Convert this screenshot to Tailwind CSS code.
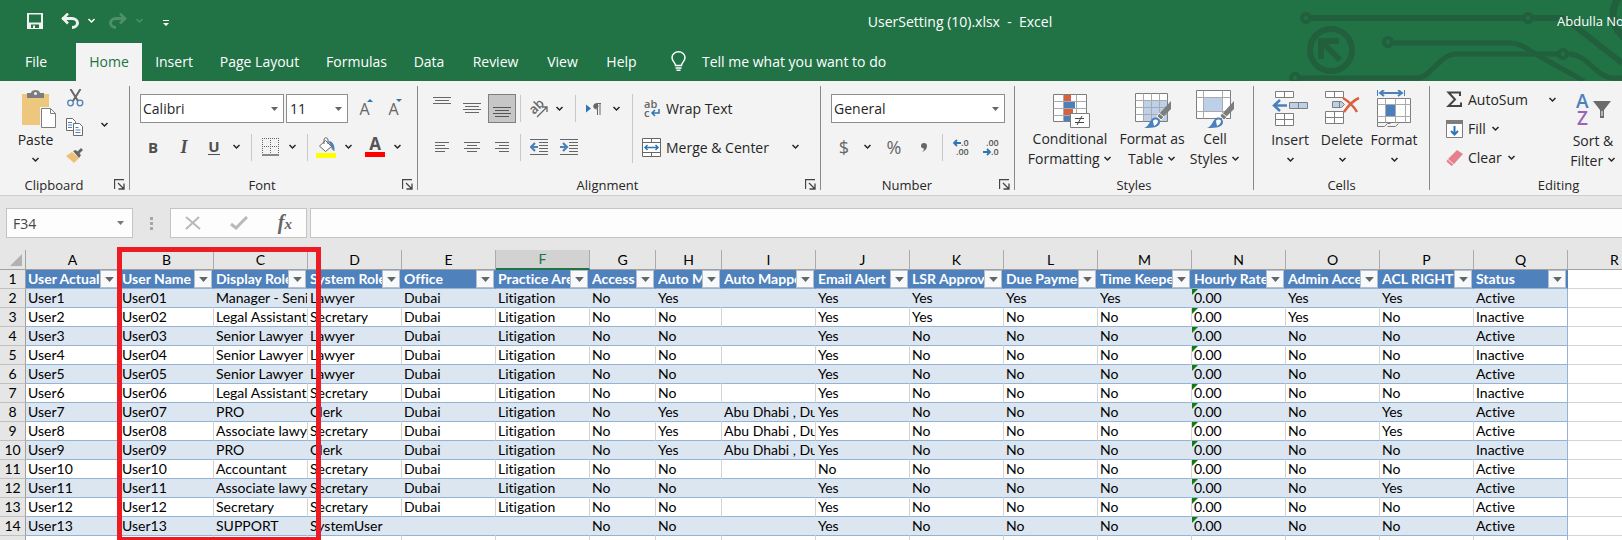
<!DOCTYPE html>
<html lang="en">
<head>
  <meta charset="UTF-8">
  <meta name="viewport" content="width=device-width, initial-scale=1.0">
  <title>UserSetting (10).xlsx - Excel</title>
  <script src="https://cdn.jsdelivr.net/npm/@tailwindcss/browser@4"></script>
</head>
<body class="h-screen overflow-hidden flex flex-col bg-[#e6e6e6] text-[#262626] text-[14px] font-['Open_Sans','Noto_Sans',sans-serif]">

  <!-- shared glyphs -->
  <svg class="hidden">
    <symbol id="chev" viewBox="0 0 8 6"><path d="M1 1l3 3 3-3" fill="none" stroke="currentColor" stroke-width="1.5"/></symbol>
    <symbol id="tri" viewBox="0 0 7 4"><path d="M0 0h7L3.500 4z" fill="currentColor"/></symbol>
    <symbol id="launch" viewBox="0 0 11 11"><path d="M.5 10V.5H10M4 4l5.500 5.500M10 4.500V10H4.500" fill="none" stroke="#444" stroke-width="1.300"/></symbol>
    <symbol id="brush" viewBox="0 0 28 28"><path d="M27 0v8l-8 8-4-3z" fill="#7d7d7d"/><path d="M15 12l5 4-3 3-4-4z" fill="#7d7d7d" stroke="#f3f3f3"/><path d="M0 27c5-2 5-6 8-9 3-3 8-1 8 3 0 5-6 6-16 6z" fill="#4a80bb"/><path d="M9 20c1-2 4-2 5 0 0 2-2 4-4 5z" fill="#fff"/></symbol>
  </svg>

  <!-- title bar + tabs -->
  <header class="relative shrink-0 bg-[#217346] text-white">
    <svg class="absolute right-0 top-0" width="336" height="81" viewBox="0 0 336 81" fill="none" stroke="#215f3d" stroke-width="6">
      <circle cx="20" cy="18" r="4" stroke-width="4"/><path d="M25 18h212M248 18h26c8 0 10 4 16 9l46 36"/><circle cx="242" cy="18" r="4" stroke-width="4"/>
      <circle cx="102" cy="42" r="4" stroke-width="4"/><path d="M107 43h118c11 0 18 8 28 13l45 25" stroke-width="5"/>
      <path d="M14 78h118c12 0 22-24 38-24h102M283 54c18 0 28 24 44 24h9" stroke-width="5"/><circle cx="277" cy="54" r="4" stroke-width="4"/>
      <circle cx="9" cy="78" r="4" stroke-width="4"/>
      <circle cx="45" cy="50" r="21"/><path d="M35 59V41h18M36 42l18 18" stroke-width="6"/>
      <circle cx="355" cy="15" r="28" stroke-width="7"/>
    </svg>
    <div class="relative flex items-center h-[43px]">
      <div class="flex items-center w-[363px] pl-[27px] pb-[2px] shrink-0">
        <button aria-label="Save"><svg width="16" height="16" viewBox="0 0 16 16"><path d="M0 0h16v16H0z" fill="#f2f2f2"/><path d="M2 1.500h12v8H2zM4 11.500h8V15H8v-2.500H6V15H4z" fill="#217346"/></svg></button>
        <button class="ml-[18px]" aria-label="Undo"><svg width="18" height="16" viewBox="0 0 18 16" fill="none" stroke="#f2f2f2" stroke-width="3"><path d="M1 5.500h10c3 0 5.500 2 5.500 4.500S14 14.500 11 14.500"/><path d="M7 .5L2 5.500l5 5" stroke-width="2.500"/></svg></button>
        <button class="ml-[8px]" aria-label="Undo list"><svg width="9" height="6"><use href="#chev"/></svg></button>
        <button class="ml-[13px] text-[#4f9068]" aria-label="Redo"><svg width="18" height="16" viewBox="0 0 18 16" fill="none" stroke="currentColor" stroke-width="3"><path d="M17 5.500H7C4 5.500 1.500 7.500 1.500 10S4 14.500 7 14.500"/><path d="M11 .5l5 5-5 5" stroke-width="2.500"/></svg></button>
        <button class="ml-[8px] text-[#4f9068]" aria-label="Redo list"><svg width="9" height="6"><use href="#chev"/></svg></button>
        <button class="ml-[19px] pt-1" aria-label="Customize"><svg width="6" height="6" viewBox="0 0 6 6"><path d="M0 0h6v1H0zM0 3h6L3 6z" fill="#fff"/></svg></button>
      </div>
      <h1 class="flex-1 text-center whitespace-pre">UserSetting (10).xlsx  -  Excel</h1>
      <span class="w-[65px] shrink-0 overflow-hidden whitespace-nowrap text-[13px]">Abdulla No</span>
    </div>
    <nav class="relative flex h-[38px] items-stretch whitespace-nowrap [&>a]:pb-[2px]">
      <a href="#" class="flex items-center pl-[25px] pr-[27px] w-[76px]">File</a>
      <a href="#" class="flex items-center justify-center w-[66px] bg-[#f3f3f3] text-[#217346]">Home</a>
      <a href="#" class="flex items-center justify-center w-[64px]">Insert</a>
      <a href="#" class="flex items-center justify-center w-[107px]">Page Layout</a>
      <a href="#" class="flex items-center justify-center w-[87px]">Formulas</a>
      <a href="#" class="flex items-center justify-center w-[58px]">Data</a>
      <a href="#" class="flex items-center justify-center w-[75px]">Review</a>
      <a href="#" class="flex items-center justify-center w-[59px]">View</a>
      <a href="#" class="flex items-center justify-center w-[59px]">Help</a>
      <a href="#" class="flex items-center gap-4 pl-[20px]">
        <svg width="15" height="20" viewBox="0 0 15 20" fill="none" stroke="#fff" stroke-width="1.500"><path d="M4.500 14.500c0-3-3.500-4-3.500-8a6.500 5.700 0 0 1 13 0c0 4-3.500 5-3.500 8zM4.500 17h6M5.500 19.200h4"/></svg>
        Tell me what you want to do
      </a>
    </nav>
  </header>

  <!-- ribbon -->
  <div class="flex shrink-0 h-[115px] py-[5px] bg-[#f3f3f3] border-b border-[#cfcfcf] overflow-hidden whitespace-nowrap [&>section]:shrink-0 [&>section]:flex [&>section]:flex-col [&>section]:justify-between [&>section]:border-r [&>section]:border-[#8a8a8a] [&_button]:flex [&_button]:items-center [&_button]:justify-center">

    <section class="w-[130px]">
      <div class="flex">
        <button class="flex-col w-[43px] ml-[14px] pt-1">
          <svg class="shrink-0 ml-[6px]" width="36" height="39" viewBox="0 0 36 39"><path d="M1 4h27v31H1z" fill="#eec77f"/><path d="M6 3h4c0-4 9-4 9 0h4v5H6z" fill="#7d7d7d"/><circle cx="14.500" cy="3.500" r="1.500" fill="#f3f3f3"/><path d="M19 17h17v22H19z" fill="#f3f3f3"/><path d="M20.500 18.500h9l5 5v14h-14z" fill="#fff" stroke="#7d7d7d"/><path d="M29.500 18.500v5h5" fill="none" stroke="#7d7d7d"/></svg>
          <span class="leading-[22px]">Paste</span>
          <svg class="mt-[6px]" width="9" height="6"><use href="#chev"/></svg>
        </button>
        <div class="flex flex-col gap-[11px] ml-[9px] pt-[3px]">
          <button aria-label="Cut"><svg width="17" height="18" viewBox="0 0 17 18" fill="none"><path d="M3.500 0l7.500 12M13.500 0L6 12" stroke="#666" stroke-width="2"/><circle cx="3.500" cy="14" r="2.800" stroke="#4a80bb" stroke-width="1.300"/><circle cx="13" cy="14" r="2.800" stroke="#4a80bb" stroke-width="1.300"/></svg></button>
          <button aria-label="Copy"><svg width="18" height="18" viewBox="0 0 18 18" fill="#fff" stroke="#6a6a6a"><path d="M.5.5h6l3 3v9h-9z"/><path d="M7.500 5.500h6l3 3v9h-9z"/><path d="M2 4.500h4M2 7h4M2 9.500h4M9.500 9.500h3M9.500 12h5M9.500 14.500h5" stroke="#4a80bb"/></svg></button>
          <button aria-label="Format Painter"><svg width="18" height="16" viewBox="0 0 18 16"><path d="M0 9l6-4 7 6-5 5z" fill="#eec077"/><path d="M7 4l3-1 5 5-2 3z" fill="#666"/><path d="M11 5l4-4 2 2-4 4z" fill="#666"/></svg></button>
        </div>
        <button class="ml-[16px]" aria-label="Copy options"><svg width="9" height="6"><use href="#chev"/></svg></button>
      </div>
      <div class="flex items-center pr-1 text-[13px] leading-[10px]"><span class="flex-1 text-center pr-[6px]">Clipboard</span><button aria-label="Clipboard settings"><svg width="11" height="11"><use href="#launch"/></svg></button></div>
    </section>

    <section class="w-[288px]">
      <div class="pt-2">
        <div class="flex h-[29px] pl-[10px]">
          <div class="relative w-[144px]"><select aria-label="Font" class="appearance-none w-full h-full bg-white border border-[#8e8e8e] px-[2px]"><option>Calibri</option></select><svg class="absolute right-[6px] top-[13px] text-[#666] pointer-events-none" width="7" height="4"><use href="#tri"/></svg></div>
          <div class="relative w-[62px] ml-[2px]"><select aria-label="Font size" class="appearance-none w-full h-full bg-white border border-[#8e8e8e] px-[3px]"><option>11</option></select><svg class="absolute right-[6px] top-[13px] text-[#666] pointer-events-none" width="7" height="4"><use href="#tri"/></svg></div>
          <button class="w-[29px] ml-[2px] relative text-[16px] text-[#666]" aria-label="Increase font size">A<svg class="absolute right-[6px] top-[5px]" width="6" height="3" viewBox="0 0 6 3"><path d="M0 3h6L3 0z" fill="#2e75b6"/></svg></button>
          <button class="w-[29px] relative text-[16px] text-[#666]" aria-label="Decrease font size">A<svg class="absolute right-[6px] top-[5px]" width="6" height="3" viewBox="0 0 6 3"><path d="M0 0h6L3 3z" fill="#2e75b6"/></svg></button>
        </div>
        <div class="flex items-center h-[28px] mt-[10px] pl-[8px]">
          <button class="w-[30px] font-bold text-[15px] text-[#505050]" aria-label="Bold">B</button>
          <button class="w-[32px] font-bold italic text-[18px] text-[#505050] font-['Liberation_Serif',serif]" aria-label="Italic">I</button>
          <button class="w-[28px]" aria-label="Underline"><span class="font-bold text-[15px] leading-[15px] text-[#505050] border-b border-[#505050]">U</span></button>
          <button class="w-[17px]" aria-label="Underline options"><svg width="9" height="6"><use href="#chev"/></svg></button>
          <i class="w-px h-[27px] bg-[#c8c8c8] mx-[6px]"></i>
          <button class="w-[24px]" aria-label="Borders"><svg width="17" height="18" viewBox="0 0 17 18" fill="none" stroke="#666"><path d="M0 .5h17M.5 0v16M16.500 0v16M8.500 0v16M0 8.500h17" stroke-dasharray="1 1"/><path d="M0 17h17" stroke-width="1.500"/></svg></button>
          <button class="w-[20px]" aria-label="Border options"><svg width="9" height="6"><use href="#chev"/></svg></button>
          <i class="w-px h-[27px] bg-[#c8c8c8] mx-[5px]"></i>
          <button class="w-[26px]" aria-label="Fill color"><svg width="20" height="21" viewBox="0 0 20 21"><path d="M12 4c4 0 7 3 6.500 10-3-1-3-4-4-6z" fill="#4a80bb"/><path d="M9.500 3.500l6 6-6 5-6-5.500z" fill="#fff" stroke="#666"/><path d="M8 7V3c0-3 4-3 4 0v4" fill="none" stroke="#666"/><path d="M0 16h20v5H0z" fill="#ff0"/></svg></button>
          <button class="w-[18px]" aria-label="Fill color options"><svg width="9" height="6"><use href="#chev"/></svg></button>
          <button class="w-[36px]" aria-label="Font color"><span class="w-[20px] h-[20px] border-b-[5px] border-[#f00] font-bold text-[17px] leading-[14px] text-[#555]">A</span></button>
          <button class="w-[9px]" aria-label="Font color options"><svg width="9" height="6"><use href="#chev"/></svg></button>
        </div>
      </div>
      <div class="flex items-center pr-1 text-[13px] leading-[10px]"><span class="flex-1 text-center pr-[8px]">Font</span><button aria-label="Font settings"><svg width="11" height="11"><use href="#launch"/></svg></button></div>
    </section>

    <section class="w-[403px]">
      <div class="flex pt-2">
        <div>
          <div class="flex items-center h-[29px] pl-[9px]">
            <button class="w-[30px] pb-[14px]" aria-label="Top align"><svg width="18" height="9" viewBox="0 0 18 9" stroke="#666"><path d="M0 .5h18M2 3.500h14M0 6.500h18"/></svg></button>
            <button class="w-[30px]" aria-label="Middle align"><svg width="18" height="11" viewBox="0 0 18 11" stroke="#666"><path d="M0 .5h18M2 3.500h14M0 6.500h18M2 9.500h14"/></svg></button>
            <button class="w-[28px] h-[29px] ml-px pt-[7px] bg-[#c6c6c6] border border-[#7f7f7f]" aria-label="Bottom align"><svg width="18" height="11" viewBox="0 0 18 11" stroke="#555"><path d="M0 .5h18M2 3.500h14M0 6.500h18M2 9.500h14"/></svg></button>
            <i class="w-px h-[27px] bg-[#c8c8c8] ml-[4px]"></i>
            <button class="w-[36px]" aria-label="Orientation"><svg width="20" height="18" viewBox="0 0 20 18"><text x="5" y="15" transform="rotate(-45 5 15)" font-size="13" font-weight="600" fill="#666">ab</text><path d="M8 17L18 7M13 7h5v5" fill="none" stroke="#666" stroke-width="1.300"/></svg></button>
            <button class="w-[4px]" aria-label="Orientation options"><svg class="shrink-0" width="9" height="6"><use href="#chev"/></svg></button>
            <i class="w-px h-[27px] bg-[#c8c8c8] ml-[14px]"></i>
            <button class="w-[36px]" aria-label="Text direction"><svg width="16" height="12" viewBox="0 0 16 12"><path d="M0 1.500v8L5 5.500z" fill="#2e75b6"/><path d="M15 .5h-4.500a2.500 2.500 0 0 0 0 5.500H11M11.500.5V12M14 .5V12" fill="none" stroke="#666"/><circle cx="10" cy="3.200" r="2.400" fill="#666"/></svg></button>
            <button class="w-[9px]" aria-label="Text direction options"><svg width="9" height="6"><use href="#chev"/></svg></button>
          </div>
          <div class="flex items-center h-[28px] mt-[10px] pl-[9px]">
            <button class="w-[30px]" aria-label="Align left"><svg width="14" height="11" viewBox="0 0 14 11" stroke="#666"><path d="M0 .5h14M0 3.500h10M0 6.500h14M0 9.500h10"/></svg></button>
            <button class="w-[30px]" aria-label="Center"><svg width="16" height="11" viewBox="0 0 16 11" stroke="#666"><path d="M0 .5h16M3 3.500h10M0 6.500h16M3 9.500h10"/></svg></button>
            <button class="w-[29px]" aria-label="Align right"><svg width="14" height="11" viewBox="0 0 14 11" stroke="#666"><path d="M0 .5h14M4 3.500h10M0 6.500h14M4 9.500h10"/></svg></button>
            <i class="w-px h-[27px] bg-[#c8c8c8] ml-[4px]"></i>
            <button class="w-[36px]" aria-label="Decrease indent"><svg width="18" height="17" viewBox="0 0 18 17" fill="none" stroke="#666"><path d="M0 .5h18M9 3.500h9M9 6.500h9M9 9.500h9M9 12.500h9M0 15.500h18"/><path d="M8 8H1M5 4L1 8l4 4" stroke="#4a80bb" stroke-width="2.200"/></svg></button>
            <button class="w-[24px]" aria-label="Increase indent"><svg width="18" height="17" viewBox="0 0 18 17" fill="none" stroke="#666"><path d="M0 .5h18M9 3.500h9M9 6.500h9M9 9.500h9M9 12.500h9M0 15.500h18"/><path d="M0 8h7M3 4l4 4-4 4" stroke="#4a80bb" stroke-width="2.200"/></svg></button>
          </div>
        </div>
        <i class="w-px h-[69px] bg-[#c8c8c8] ml-[11px]"></i>
        <div class="pl-[9px]">
          <button class="h-[29px] gap-[5px]"><svg width="19" height="18" viewBox="0 0 19 18"><text x="2" y="8" font-size="11" font-weight="600" fill="#666">ab</text><text x="2" y="17" font-size="11" font-weight="600" fill="#666">c</text><path d="M17 9v4h-7M13 10l-3 3 3 3" fill="none" stroke="#2e75b6" stroke-width="1.500"/></svg>Wrap Text</button>
          <button class="h-[28px] mt-[10px] gap-[5px]"><svg width="19" height="19" viewBox="0 0 19 19" fill="#fff" stroke="#666"><path d="M.5.5h18v18H.5zM.5 4.500h18M.5 14.500h18M9.500.5v4M9.500 14.500v4"/><path d="M3 9.500h13M5.500 7L3 9.500 5.500 12M13.500 7L16 9.500 13.500 12" fill="none" stroke="#2e75b6" stroke-width="1.500"/></svg><span class="w-[120px] text-left">Merge &amp; Center</span><svg width="9" height="6"><use href="#chev"/></svg></button>
        </div>
      </div>
      <div class="flex items-center pr-1 text-[13px] leading-[10px]"><span class="flex-1 text-center pr-[8px]">Alignment</span><button aria-label="Alignment settings"><svg width="11" height="11"><use href="#launch"/></svg></button></div>
    </section>

    <section class="w-[194px]">
      <div class="pt-2 pl-[10px]">
        <div class="relative w-[174px] h-[29px]"><select aria-label="Number format" class="appearance-none w-full h-full bg-white border border-[#8e8e8e] px-[2px]"><option>General</option></select><svg class="absolute right-[6px] top-[13px] text-[#666] pointer-events-none" width="7" height="4"><use href="#tri"/></svg></div>
        <div class="flex items-center h-[28px] mt-[10px] text-[#666]">
          <button class="w-[26px] text-[18px]" aria-label="Currency">$</button>
          <button class="w-[20px] text-[#262626]" aria-label="Currency options"><svg width="9" height="6"><use href="#chev"/></svg></button>
          <button class="w-[34px] text-[18px]" aria-label="Percent">%</button>
          <button class="w-[25px]" aria-label="Comma style"><svg width="6" height="9" viewBox="0 0 6 9"><path d="M0 3a3 3 0 1 1 6 0c0 3-2 5-5 6 1-1 2-2 2-3.500C1 5.500 0 4.500 0 3z" fill="#666"/></svg></button>
          <i class="w-px h-[27px] bg-[#c8c8c8] ml-[6px] mr-[3px]"></i>
          <button class="w-[30px]" aria-label="Increase decimal"><svg width="17" height="18" viewBox="0 0 17 18" font-size="9" font-weight="600" fill="#555"><text x="8" y="8">.0</text><text x="3" y="17">.00</text><path d="M8 5H1M4 2L1 5l3 3" fill="none" stroke="#2e75b6" stroke-width="1.800"/></svg></button>
          <button class="w-[30px]" aria-label="Decrease decimal"><svg width="17" height="18" viewBox="0 0 17 18" font-size="9" font-weight="600" fill="#555"><text x="3" y="8">.00</text><text x="8" y="17">.0</text><path d="M0 14h7M4 11l3 3-3 3" fill="none" stroke="#2e75b6" stroke-width="1.800"/></svg></button>
        </div>
      </div>
      <div class="flex items-center pr-1 text-[13px] leading-[10px]"><span class="flex-1 text-center pr-[6px]">Number</span><button aria-label="Number settings"><svg width="11" height="11"><use href="#launch"/></svg></button></div>
    </section>

    <section class="w-[239px]">
      <div class="flex pl-[10px] leading-[20px]">
        <button class="flex-col w-[90px] pt-1">
          <svg width="40" height="39" viewBox="0 0 40 39"><g fill="#fff" stroke="#7d7d7d"><path d="M3.500 4.500h33v27h-33z"/><path d="M3.500 11.500h33M3.500 18.500h33M3.500 25.500h33M13.500 4.500v27M26.500 4.500v27" stroke="#aaa"/></g><path d="M14 5h7v6h-7zM14 19h9v6h-9z" fill="#d9603f"/><path d="M14 12h11v6H14zM14 26h6v5h-6z" fill="#4a80bb"/><path d="M20.500 23.500h19v14h-19z" fill="#fff" stroke="#7d7d7d"/><path d="M25 28.500h9M25 32.500h9M32 26l-5 9" stroke="#444"/></svg>
          <span class="h-[20px]">Conditional</span><span class="h-[20px]">Formatting <svg class="inline mb-[3px]" width="9" height="6"><use href="#chev"/></svg></span>
        </button>
        <button class="flex-col w-[74px] pt-1">
          <svg width="40" height="39" viewBox="0 0 40 39"><g fill="#fff" stroke="#7d7d7d"><path d="M3.500 3.500h32v28h-32z"/><path d="M12 11h23v20H12z" fill="#bdd0e9" stroke="none"/><path d="M3.500 10.500h32M3.500 17.500h32M3.500 24.500h32M11.500 3.500v28M19.500 3.500v28M27.500 3.500v28" fill="none" stroke="#aaa"/></g><use href="#brush" x="12" y="11" width="28" height="28"/></svg>
          <span class="h-[20px]">Format as</span><span class="h-[20px]">Table <svg class="inline mb-[3px]" width="9" height="6"><use href="#chev"/></svg></span>
        </button>
        <button class="flex-col w-[52px] pt-1">
          <svg width="40" height="39" viewBox="0 0 40 39"><g fill="#fff" stroke="#7d7d7d"><path d="M1.500.5h34v28h-34z"/><path d="M9 8h19v13H9z" fill="#bdd0e9" stroke="none"/><path d="M1.500 7.500h34M1.500 21.500h34M8.500.5v28M27.500.5v28" fill="none" stroke="#aaa"/></g><use href="#brush" x="12" y="11" width="28" height="28"/></svg>
          <span class="h-[20px]">Cell</span><span class="h-[20px]">Styles <svg class="inline mb-[3px]" width="9" height="6"><use href="#chev"/></svg></span>
        </button>
      </div>
      <div class="text-center text-[13px] leading-[10px]">Styles</div>
    </section>

    <section class="w-[176px]">
      <div class="flex pl-[10px]">
        <button class="flex-col w-[52px] pt-1">
          <svg width="36" height="39" viewBox="0 0 36 39"><g fill="#fff" stroke="#7d7d7d"><path d="M3.500 1.500h18v6h-18zM12.500 1.500v6M3.500 23.500h18v12h-18zM3.500 29.500h18M12.500 23.500v12"/><path d="M17.500 12.500h18v6h-18zM26.500 12.500v6" fill="#bdd0e9"/></g><path d="M15 15.500H2M8 10l-6 5.500L8 21" fill="none" stroke="#4a80bb" stroke-width="2.500"/></svg>
          <span class="leading-[22px]">Insert</span><svg class="mt-[6px]" width="9" height="6"><use href="#chev"/></svg>
        </button>
        <button class="flex-col w-[52px] pt-1">
          <svg width="36" height="39" viewBox="0 0 36 39"><g fill="#fff" stroke="#7d7d7d"><path d="M1.500 1.500h18v6h-18zM10.500 1.500v6M1.500 21.500h18v12h-18zM1.500 27.500h18M10.500 21.500v12"/><path d="M8.500 11.500h9l3 3-3 3h-9zM15.500 11.500v6" fill="#bdd0e9"/></g><path d="M19 8c5 3 10 7 14 14M35 8c-7 3-11 8-15 14" fill="none" stroke="#d9603f" stroke-width="2.500"/></svg>
          <span class="leading-[22px]">Delete</span><svg class="mt-[6px]" width="9" height="6"><use href="#chev"/></svg>
        </button>
        <button class="flex-col w-[52px] pt-1">
          <svg width="36" height="39" viewBox="0 0 36 39"><path d="M1.500 0v6M28.500 0v6" stroke="#4a80bb"/><path d="M4 3h22M8 0L4 3l4 3M22 0l4 3-4 3" fill="none" stroke="#4a80bb" stroke-width="2"/><g fill="#fff" stroke="#7d7d7d"><path d="M1.500 8.500h33v24h-33z"/><path d="M1.500 14.500h33M1.500 26.500h33M9.500 8.500v24M19.500 8.500v24M29.500 8.500v24" stroke="#aaa"/><path d="M1.500 33v3.500h7l3-3h3M11.500 36.500h8l3-3" fill="none"/></g><path d="M10 15h9v11h-9z" fill="#4a80bb"/></svg>
          <span class="leading-[22px]">Format</span><svg class="mt-[6px]" width="9" height="6"><use href="#chev"/></svg>
        </button>
      </div>
      <div class="text-center text-[13px] leading-[10px]">Cells</div>
    </section>

    <section class="w-[258px]">
      <div class="flex pl-[16px]">
        <div class="w-[112px]">
          <button class="h-[27px]"><svg width="17" height="17" viewBox="0 0 17 17"><path d="M14 5V1.500H2.500L9 8.500l-6.500 6.500H15V11.500" fill="none" stroke="#444" stroke-width="2"/></svg><span class="w-[80px] text-left pl-[5px]">AutoSum</span><svg class="ml-[5px]" width="9" height="6"><use href="#chev"/></svg></button>
          <button class="h-[29px] mt-px gap-[5px]"><svg width="17" height="18" viewBox="0 0 17 18"><path d="M.5.5h16v17H.5z" fill="#fff" stroke="#7d7d7d"/><path d="M0 0h17v4H0z" fill="#7d7d7d"/><path d="M8.500 6v8M5 11l3.500 3.500L12 11" fill="none" stroke="#2e75b6" stroke-width="2"/></svg>Fill<svg width="9" height="6"><use href="#chev"/></svg></button>
          <button class="h-[29px] gap-[5px]"><svg width="17" height="17" viewBox="0 0 17 17"><path d="M11 1l6 4-9 10-6-5z" fill="#e6808f"/><path d="M1.500 10.500l6 5-2 1.500-5-4.500z" fill="#e6808f"/></svg>Clear<svg width="9" height="6"><use href="#chev"/></svg></button>
        </div>
        <button class="flex-col w-[70px] pt-1 leading-[20px]">
          <svg width="36" height="39" viewBox="0 0 36 39" font-size="19" font-weight="600"><text x="1" y="16" fill="#4a80bb">A</text><text x="2" y="33" fill="#9a62b8">Z</text><path d="M18 9h18l-7 9v8h-4v-8z" fill="#6b6b6b"/><path d="M26.500 19h1v5h-1z" fill="#fff"/></svg>
          <span class="h-[20px]">Sort &amp;</span><span class="h-[20px]">Filter <svg class="inline mb-[3px]" width="9" height="6"><use href="#chev"/></svg></span>
        </button>
      </div>
      <div class="text-center text-[13px] leading-[10px]">Editing</div>
    </section>
  </div>

  <!-- formula bar -->
  <div class="flex shrink-0 items-center h-[54px] pl-[6px]">
    <div class="relative w-[127px] h-[30px]"><input aria-label="Name box" value="F34" class="w-full h-full bg-[#fdfdfd] border border-[#c4c4c4] px-[6px] text-[#444]"><svg class="absolute right-[9px] top-[13px] text-[#777] pointer-events-none" width="7" height="4"><use href="#tri"/></svg></div>
    <svg class="ml-[17px]" width="3" height="13" viewBox="0 0 3 13" fill="#a6a6a6"><path d="M0 0h3v3H0zM0 5h3v3H0zM0 10h3v3H0z"/></svg>
    <div class="flex items-center justify-between w-[137px] h-[30px] ml-[17px] px-[14px] bg-[#fdfdfd] border border-[#c4c4c4]">
      <button aria-label="Cancel"><svg width="16" height="14" viewBox="0 0 16 14"><path d="M1 1l14 12M14 1L1 13" stroke="#b9b9b9" stroke-width="2"/></svg></button>
      <button aria-label="Enter"><svg width="18" height="14" viewBox="0 0 18 14"><path d="M1 8l5 4L17 1" fill="none" stroke="#b9b9b9" stroke-width="3"/></svg></button>
      <button aria-label="Insert function" class="italic font-bold text-[20px] leading-[20px] text-[#666] font-['Liberation_Serif',serif]">f<span class="text-[15px]">x</span></button>
    </div>
    <input aria-label="Formula" class="flex-1 h-[30px] ml-[3px] bg-[#fdfdfd] border border-r-0 border-[#c4c4c4] px-2">
  </div>

  <!-- sheet -->
  <main class="relative flex-1 min-h-0">
    <table class="w-[1662px] table-fixed border-separate border-spacing-0 bg-white text-black text-[14px] leading-[18px] [font-variant-ligatures:none] font-['Lato','Noto_Sans',sans-serif] [&_td]:h-[19px] [&_td]:p-0 [&_td]:pl-[2px] [&_td]:whitespace-nowrap [&_td]:overflow-hidden [&_td]:border-b [&_td]:border-r">
      <colgroup id="cols"></colgroup>
      <thead><tr id="letters"></tr></thead>
      <tbody id="rows"></tbody>
    </table>
    <!-- highlighted columns -->
    <div class="absolute left-[117px] top-[-3px] bottom-0 w-[204px] border-[5px] border-b-[3px] border-[#ed1c24]"></div>
  </main>

  <script>
    const heads = ['User Actual', 'User Name', 'Display Role', 'System Role', 'Office', 'Practice Area', 'Access', 'Auto Mapped', 'Auto Mapped', 'Email Alert', 'LSR Approve', 'Due Payment', 'Time Keeper', 'Hourly Rate', 'Admin Access', 'ACL RIGHTS', 'Status'];
    const D = 'Dubai', L = 'Litigation', Y = 'Yes', N = 'No', M = 'Abu Dhabi , Dubai';
    const data = [
      ['User1', 'User01', 'Manager - Senior', 'Lawyer', D, L, N, Y, '', Y, Y, Y, Y, '0.00', Y, Y, 'Active'],
      ['User2', 'User02', 'Legal Assistant', 'Secretary', D, L, N, N, '', Y, Y, N, N, '0.00', Y, N, 'Inactive'],
      ['User3', 'User03', 'Senior Lawyer', 'Lawyer', D, L, N, N, '', Y, N, N, N, '0.00', N, N, 'Active'],
      ['User4', 'User04', 'Senior Lawyer', 'Lawyer', D, L, N, N, '', Y, N, N, N, '0.00', N, N, 'Inactive'],
      ['User5', 'User05', 'Senior Lawyer', 'Lawyer', D, L, N, N, '', Y, N, N, N, '0.00', N, N, 'Active'],
      ['User6', 'User06', 'Legal Assistant', 'Secretary', D, L, N, N, '', Y, N, N, N, '0.00', N, N, 'Inactive'],
      ['User7', 'User07', 'PRO', 'Clerk', D, L, N, Y, M, Y, N, N, N, '0.00', N, Y, 'Active'],
      ['User8', 'User08', 'Associate lawyer', 'Secretary', D, L, N, Y, M, Y, N, N, N, '0.00', N, Y, 'Active'],
      ['User9', 'User09', 'PRO', 'Clerk', D, L, N, Y, M, Y, N, N, N, '0.00', N, N, 'Inactive'],
      ['User10', 'User10', 'Accountant', 'Secretary', D, L, N, N, '', N, N, N, N, '0.00', N, N, 'Active'],
      ['User11', 'User11', 'Associate lawyer', 'Secretary', D, L, N, N, '', Y, N, N, N, '0.00', N, Y, 'Active'],
      ['User12', 'User12', 'Secretary', 'Secretary', D, L, N, N, '', Y, N, N, N, '0.00', N, N, 'Active'],
      ['User13', 'User13', 'SUPPORT', 'SystemUser', '', '', N, N, '', Y, N, N, N, '0.00', N, N, 'Active'],
      ['', '', '', '', '', '', '', '', '', '', '', '', '', '', '', '', '']
    ];
    const letters = 'ABCDEFGHIJKLMNOPQR'.split('');

    document.getElementById('cols').innerHTML = '<col class="w-[26px]">' +
      letters.map(l => l == 'G' || l == 'H' ? '<col class="w-[66px]">' : '<col class="w-[94px]">').join('');

    document.getElementById('letters').innerHTML =
      '<th class="h-[20px] p-0 bg-[#e6e6e6] border-b border-r border-[#a0a0a0]"><svg class="ml-auto mr-[3px]" width="12" height="12"><path d="M12 0v12H0z" fill="#b2b2b2"/></svg></th>' +
      letters.map(l => l == 'F'
        ? '<th class="h-[20px] p-0 font-normal bg-[#d2d2d2] text-[#217346] border-b-2 border-b-[#217346] border-r border-r-[#ababab]">F</th>'
        : `<th class="h-[20px] p-0 font-normal bg-[#e6e6e6] border-b border-b-[#a0a0a0] border-r border-r-[#ababab]">${l}</th>`).join('');

    const rowHead = n => `<th class="p-0 font-normal bg-[#e6e6e6] border-b border-b-[#c0c0c0] border-r border-r-[#a0a0a0]">${n}</th>`;
    const empty = '<td class="bg-white border-[#d4d4d4]"></td>';

    let html = '<tr>' + rowHead(1) + heads.map(h =>
      `<td class="bg-[#4f81bd] border-[#95b3d7] border-r-[#4f81bd]"><div class="flex h-[18px] pr-px font-bold text-white"><span class="flex-1 min-w-0 overflow-hidden">${h}</span><button aria-label="Filter ${h}" class="w-[18px] h-[18px] shrink-0 flex items-center justify-center bg-[#f8f9fb] border border-[#b5bfcc] text-[#666]"><svg width="9" height="5"><use href="#tri"/></svg></button></div></td>`).join('') + empty + '</tr>';

    data.forEach((row, r) => {
      const band = r % 2 == 0;
      html += '<tr>' + rowHead(r + 2) + row.map((v, c) => {
        let cls = band ? 'bg-[#dce6f1] border-b-[#95b3d7] border-r-[#dce6f1]' : 'bg-white border-b-[#95b3d7] border-r-[#d4d4d4]';
        if (c == 16) cls = band ? 'bg-[#dce6f1] border-[#95b3d7]' : 'bg-white border-[#95b3d7]';
        // green corner: number stored as text
        const mark = v == '0.00' ? '<svg class="absolute left-0 top-0" width="6" height="6"><path d="M0 0h6L0 6z" fill="#107c10"/></svg>' : '';
        return `<td class="relative ${cls}">${mark}${v}</td>`;
      }).join('') + empty + '</tr>';
    });
    document.getElementById('rows').innerHTML = html;
  </script>
</body>
</html>
